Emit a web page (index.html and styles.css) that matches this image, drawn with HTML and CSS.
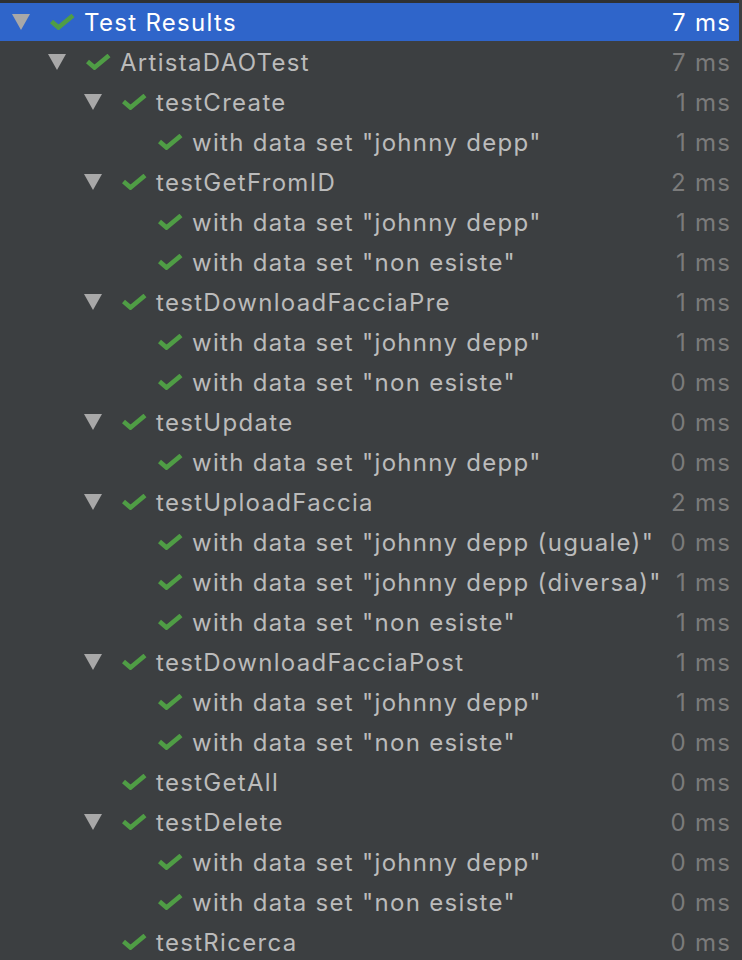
FILE: index.html
```html
<!DOCTYPE html>
<html>
<head>
<meta charset="utf-8">
<link rel="stylesheet" href="styles.css">
</head>
<body>
<svg width="0" height="0" class="defs">
  <defs>
    <symbol id="chk" viewBox="0 0 25 16"><polyline points="1.5,7.5 8.5,13.5 23,1.5" fill="none" stroke="#4f9d45" stroke-width="4.6"/></symbol>
    <symbol id="tri" viewBox="0 0 18 16"><polygon points="0,0 18,0 9,16" fill="#a8a8a8"/></symbol>
  </defs>
</svg>
<div class="tree">
  <div class="row sel l0"><span class="arrow"><svg><use href="#tri"/></svg></span><svg class="check"><use href="#chk"/></svg><span class="name">Test Results</span><span class="time">7 ms</span></div>
  <div class="row l1"><span class="arrow"><svg><use href="#tri"/></svg></span><svg class="check"><use href="#chk"/></svg><span class="name">ArtistaDAOTest</span><span class="time">7 ms</span></div>
  <div class="row l2"><span class="arrow"><svg><use href="#tri"/></svg></span><svg class="check"><use href="#chk"/></svg><span class="name">testCreate</span><span class="time">1 ms</span></div>
  <div class="row l3"><span class="arrow"></span><svg class="check"><use href="#chk"/></svg><span class="name">with data set "johnny depp"</span><span class="time">1 ms</span></div>
  <div class="row l2"><span class="arrow"><svg><use href="#tri"/></svg></span><svg class="check"><use href="#chk"/></svg><span class="name">testGetFromID</span><span class="time">2 ms</span></div>
  <div class="row l3"><span class="arrow"></span><svg class="check"><use href="#chk"/></svg><span class="name">with data set "johnny depp"</span><span class="time">1 ms</span></div>
  <div class="row l3"><span class="arrow"></span><svg class="check"><use href="#chk"/></svg><span class="name">with data set "non esiste"</span><span class="time">1 ms</span></div>
  <div class="row l2"><span class="arrow"><svg><use href="#tri"/></svg></span><svg class="check"><use href="#chk"/></svg><span class="name">testDownloadFacciaPre</span><span class="time">1 ms</span></div>
  <div class="row l3"><span class="arrow"></span><svg class="check"><use href="#chk"/></svg><span class="name">with data set "johnny depp"</span><span class="time">1 ms</span></div>
  <div class="row l3"><span class="arrow"></span><svg class="check"><use href="#chk"/></svg><span class="name">with data set "non esiste"</span><span class="time">0 ms</span></div>
  <div class="row l2"><span class="arrow"><svg><use href="#tri"/></svg></span><svg class="check"><use href="#chk"/></svg><span class="name">testUpdate</span><span class="time">0 ms</span></div>
  <div class="row l3"><span class="arrow"></span><svg class="check"><use href="#chk"/></svg><span class="name">with data set "johnny depp"</span><span class="time">0 ms</span></div>
  <div class="row l2"><span class="arrow"><svg><use href="#tri"/></svg></span><svg class="check"><use href="#chk"/></svg><span class="name">testUploadFaccia</span><span class="time">2 ms</span></div>
  <div class="row l3"><span class="arrow"></span><svg class="check"><use href="#chk"/></svg><span class="name">with data set "johnny depp (uguale)"</span><span class="time">0 ms</span></div>
  <div class="row l3"><span class="arrow"></span><svg class="check"><use href="#chk"/></svg><span class="name">with data set "johnny depp (diversa)"</span><span class="time">1 ms</span></div>
  <div class="row l3"><span class="arrow"></span><svg class="check"><use href="#chk"/></svg><span class="name">with data set "non esiste"</span><span class="time">1 ms</span></div>
  <div class="row l2"><span class="arrow"><svg><use href="#tri"/></svg></span><svg class="check"><use href="#chk"/></svg><span class="name">testDownloadFacciaPost</span><span class="time">1 ms</span></div>
  <div class="row l3"><span class="arrow"></span><svg class="check"><use href="#chk"/></svg><span class="name">with data set "johnny depp"</span><span class="time">1 ms</span></div>
  <div class="row l3"><span class="arrow"></span><svg class="check"><use href="#chk"/></svg><span class="name">with data set "non esiste"</span><span class="time">0 ms</span></div>
  <div class="row l2"><span class="arrow"></span><svg class="check"><use href="#chk"/></svg><span class="name">testGetAll</span><span class="time">0 ms</span></div>
  <div class="row l2"><span class="arrow"><svg><use href="#tri"/></svg></span><svg class="check"><use href="#chk"/></svg><span class="name">testDelete</span><span class="time">0 ms</span></div>
  <div class="row l3"><span class="arrow"></span><svg class="check"><use href="#chk"/></svg><span class="name">with data set "johnny depp"</span><span class="time">0 ms</span></div>
  <div class="row l3"><span class="arrow"></span><svg class="check"><use href="#chk"/></svg><span class="name">with data set "non esiste"</span><span class="time">0 ms</span></div>
  <div class="row l2"><span class="arrow"></span><svg class="check"><use href="#chk"/></svg><span class="name">testRicerca</span><span class="time">0 ms</span></div>
</div>
</body>
</html>
```
FILE: styles.css
```css
html, body {
  margin: 0;
  padding: 0;
  background: #3c3f41;
  height: 100%;
  overflow: hidden;
}
.defs {
  position: absolute;
  width: 0;
  height: 0;
}
.tree {
  width: 739px;
  border-top: 3px solid #2f3133;
  font-family: Inter, "Noto Sans", sans-serif;
  font-size: 24px;
  letter-spacing: 1.3px;
  color: #bbbbbb;
}
.row {
  display: flex;
  align-items: center;
  height: 40px;
  padding-right: 7.7px;
  white-space: nowrap;
}
.row.sel {
  height: 38px;
  margin-bottom: 1px;
  background: #2f65ca;
  color: #ffffff;
}
.l0 { padding-left: 12px; }
.l1 { padding-left: 48px; }
.l2 { padding-left: 84px; }
.l3 { padding-left: 120px; }
.arrow {
  width: 18px;
  height: 16px;
  flex: none;
  margin-right: 20px;
  display: flex;
}
.arrow svg {
  width: 18px;
  height: 16px;
}
.check {
  width: 25px;
  height: 16px;
  flex: none;
  margin-right: 9px;
}
.name {
  flex: 1;
}
.time {
  color: #7b7b7b;
  margin-left: 12px;
}
.sel .time {
  color: #ffffff;
}
```
